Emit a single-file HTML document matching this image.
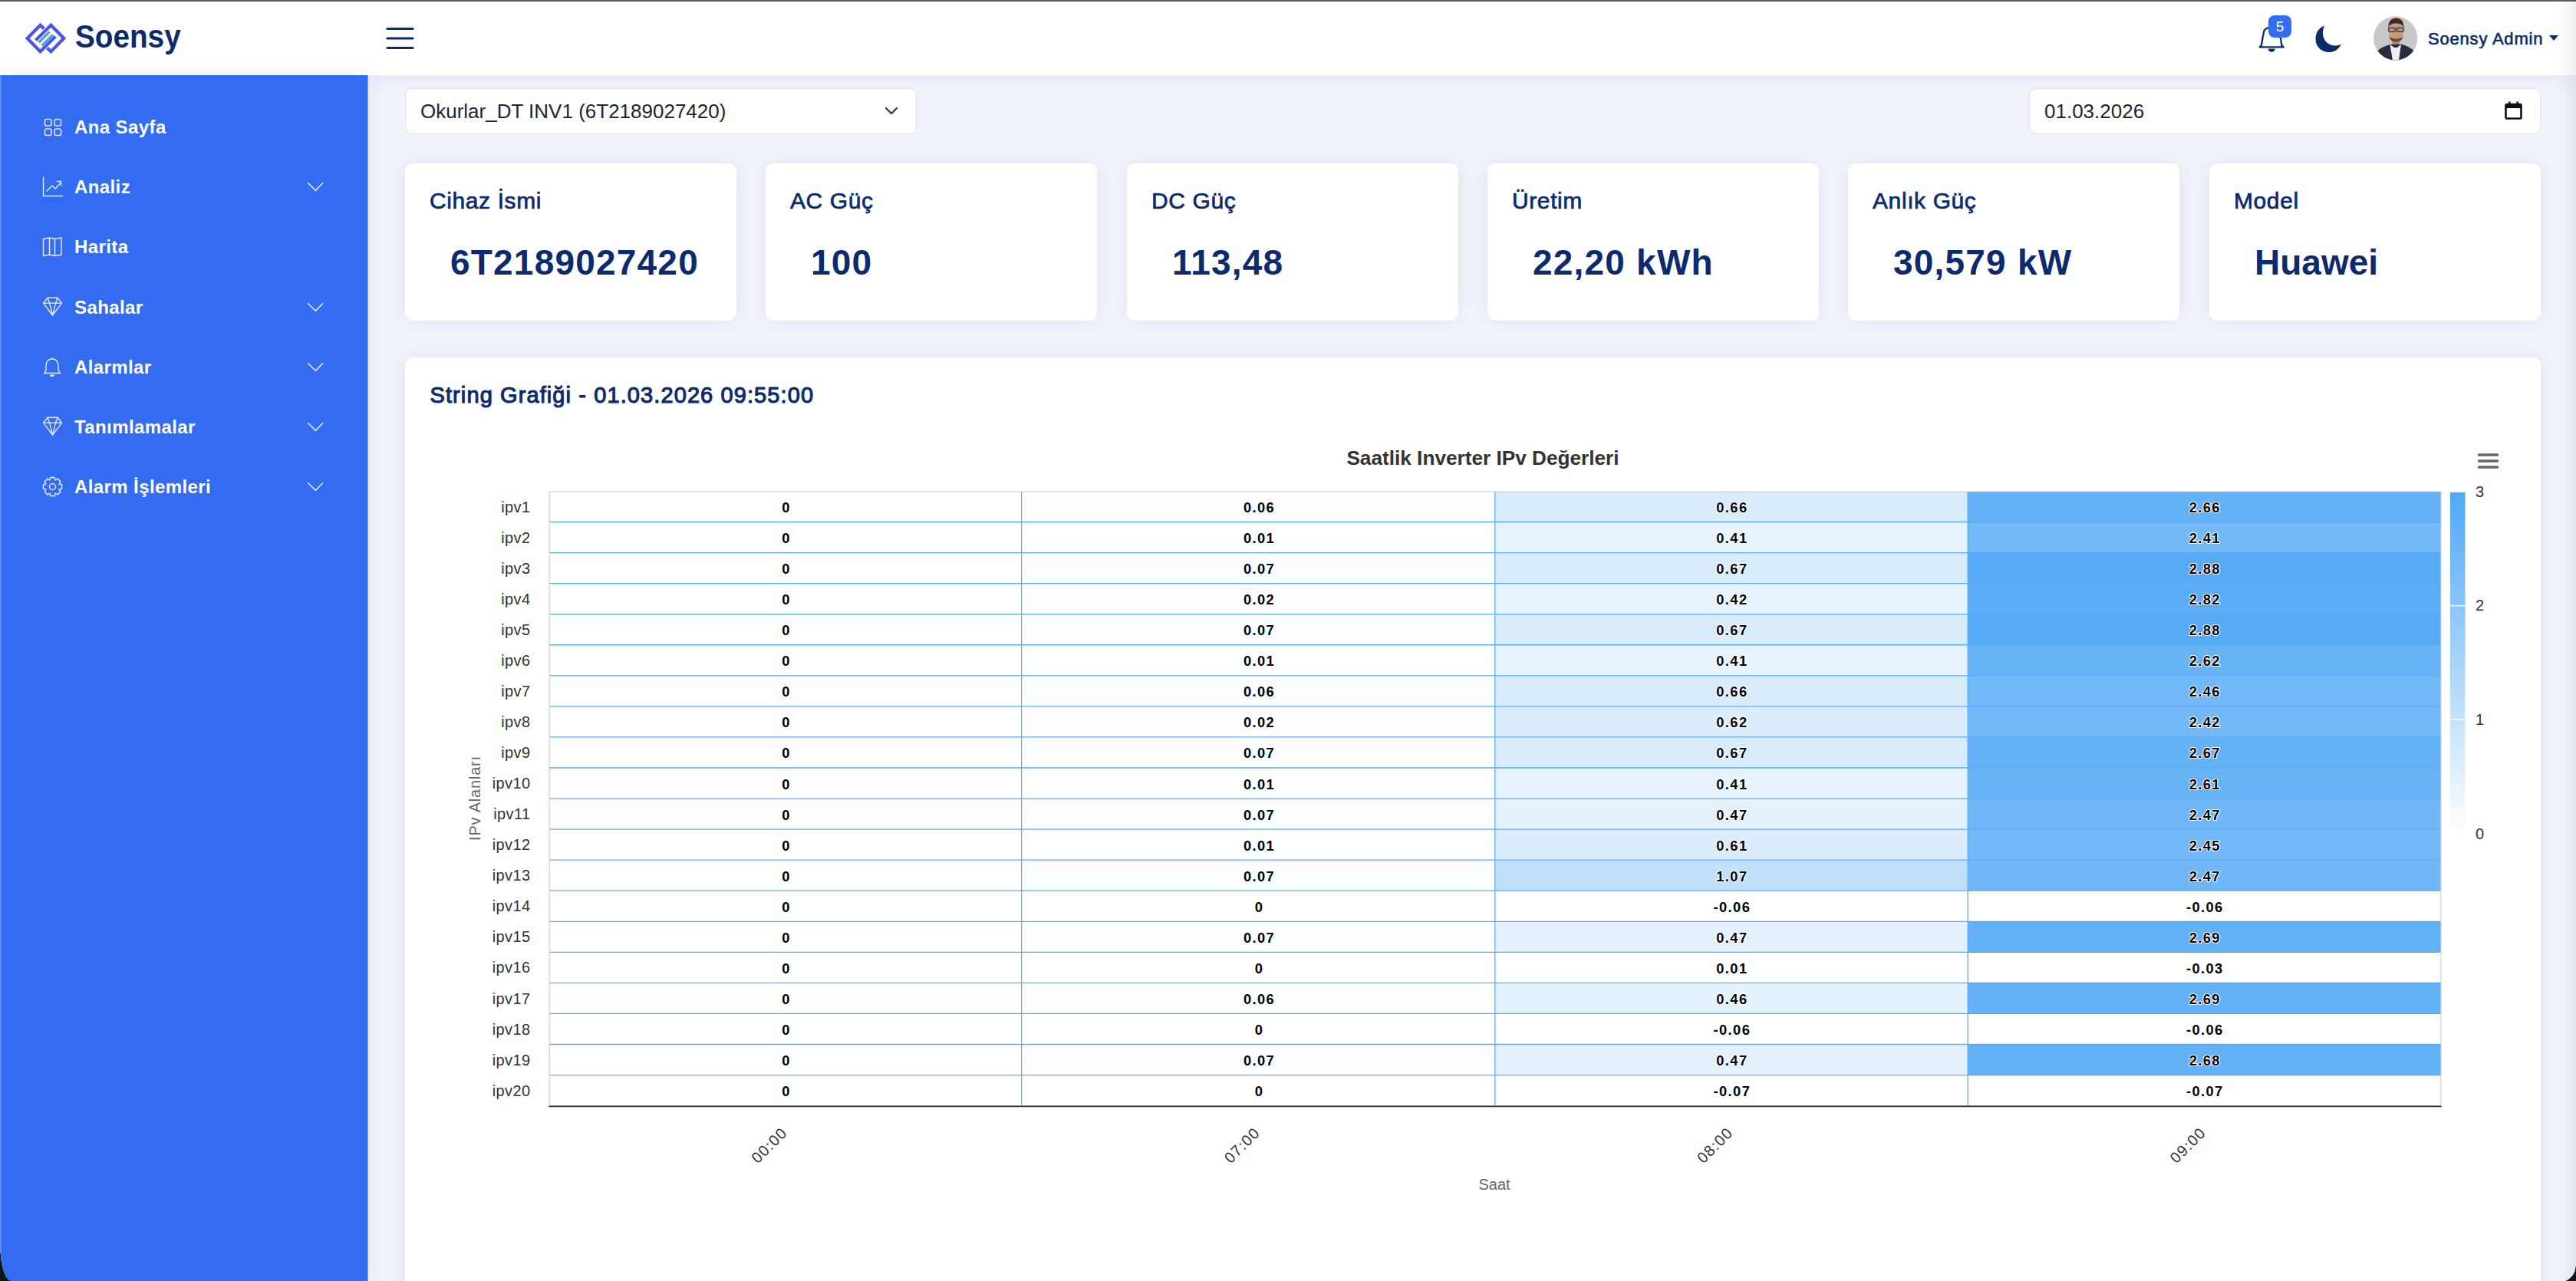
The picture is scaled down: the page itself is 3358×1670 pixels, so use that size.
<!DOCTYPE html>
<html lang="tr">
<head>
<meta charset="utf-8">
<title>Soensy</title>
<style>
*{box-sizing:border-box;margin:0;padding:0}
html,body{width:3358px;height:1670px;overflow:hidden}
body{position:relative;background:#f1f3fb;font-family:"Liberation Sans",sans-serif;color:#212529}
.abs{position:absolute}
#topline{left:0;top:0;width:3358px;height:2px;background:#5c5c5c;z-index:5}
#header{left:0;top:0;width:3358px;height:98px;background:#fff;z-index:2;box-shadow:0 0 24px rgba(60,80,160,.09)}
#sidebar{left:0;top:98px;width:480px;height:1572px;background:#336cf1;z-index:2;box-shadow:0 0 24px rgba(60,80,160,.09)}
#sidebar:before{content:"";position:absolute;left:0;top:0;width:2px;height:100%;background:#5a88f4}
#sidebar:after{content:"";position:absolute;right:0;top:0;width:1px;height:100%;background:#7ea2f6}
.menu{position:absolute;left:0;width:480px;height:40px}
.menu .t{position:absolute;left:97px;top:0;font-size:24px;letter-spacing:0.4px;font-weight:bold;color:#fff;line-height:40px;white-space:nowrap}
.menu svg.ic{position:absolute;left:55px;top:6px}
.menu svg.ch{position:absolute;left:399px;top:13px}
.box{background:#fff;border:1px solid #dfe2ea;border-radius:9px}
.card{position:absolute;top:213px;width:432px;height:205px;background:#fff;border-radius:10px;box-shadow:0 0 24px rgba(60,80,160,.09)}
.card .ti{position:absolute;left:32px;top:29.3px;font-size:30px;color:#0c2a6e;white-space:nowrap;line-height:40px;-webkit-text-stroke:0.7px #0c2a6e;letter-spacing:0.6px}
.card .va{position:absolute;left:59px;top:99.4px;font-size:46px;font-weight:bold;color:#0c2a6e;white-space:nowrap;line-height:60px;letter-spacing:1.2px}
</style>
</head>
<body>
<div id="topline" class="abs"></div>
<div id="header" class="abs">
  <!-- logo -->
  <svg class="abs" style="left:0;top:0" width="100" height="98" viewBox="0 0 100 98">
    <g fill="none" stroke="#4b55e8" stroke-width="4.3" stroke-linecap="butt" stroke-linejoin="miter">
      <polyline points="57.3,37.6 52.5,32.8 35.7,50 52.5,67.2 72.3,47.4"/>
      <polyline points="61.6,62.4 66.4,67.2 83.2,50 66.4,32.8 46.6,52.6"/>
    </g>
    <g stroke="#4aa6d8" stroke-width="3.4" stroke-linecap="butt">
      <line x1="50.6" y1="55.4" x2="64.6" y2="41.4"/>
      <line x1="54.8" y1="59.4" x2="68.8" y2="45.4"/>
    </g>
  </svg>
  <div class="abs" style="left:97.5px;top:19.6px;font-size:43px;font-weight:bold;color:#0d2a6b;line-height:54px;transform:scaleX(0.9);transform-origin:0 0">Soensy</div>
  <!-- hamburger -->
  <svg class="abs" style="left:503px;top:35px" width="38" height="30" viewBox="0 0 38 30">
    <g stroke="#0d2a6b" stroke-width="3.2" stroke-linecap="round">
      <line x1="2" y1="2.5" x2="35" y2="2.5"/><line x1="2" y1="15" x2="35" y2="15"/><line x1="2" y1="27.5" x2="35" y2="27.5"/>
    </g>
  </svg>
  <!-- bell -->
  <svg class="abs" style="left:2940px;top:25px" width="44" height="50" viewBox="0 0 44 50">
    <path d="M5.5 36.3 L7.9 34.3 L10.6 18.5 C11.1 14.6 13.8 10.9 19.5 10.9 L22.9 10.9 C28.6 10.9 31.3 14.6 31.8 18.5 L34.5 34.3 L36.9 36.3 Z" fill="none" stroke="#0d2a6b" stroke-width="2.3" stroke-linejoin="round"/>
    <path d="M16.8 38.4 L25.7 38.4 A4.45 4.45 0 0 1 16.8 38.4 Z" fill="#0d2a6b"/>
  </svg>
  <div class="abs" style="left:2957px;top:20px;width:30px;height:29px;background:#336cf1;border-radius:8px;color:#fff;font-size:19px;line-height:29px;text-align:center">5</div>
  <!-- moon -->
  <svg class="abs" style="left:3017px;top:31px" width="38" height="40" viewBox="0 0 38 40">
    <path d="M13 2.5 C5 5.5 1.5 12.5 1.5 20 C1.5 30 9.5 37 19 37 C26 37 32 33 35 26.5 C32 28 29.5 28.5 27 28.5 C18 28.5 11 21.5 11 12.5 C11 9 11.8 5.5 13 2.5 Z" fill="#0d2a6b"/>
  </svg>
  <!-- avatar -->
  <svg class="abs" style="left:3094px;top:21px" width="58" height="58" viewBox="0 0 58 58">
    <defs><clipPath id="avc"><circle cx="28.7" cy="28.8" r="28.6"/></clipPath></defs>
    <g clip-path="url(#avc)">
      <rect width="58" height="58" fill="#c8c8c8"/>
      <rect x="24" y="28" width="10" height="12" fill="#b98a70"/>
      <path d="M2 58 L4 47 C8 42 14 39.5 21 37 L36 36.5 C44 39 50 42 54 47 L58 58 Z" fill="#262c42"/>
      <path d="M21.5 37 L25 58 L33 58 L36 36.5 L31 41 L27 41 Z" fill="#eeeeee"/>
      <ellipse cx="29.5" cy="19.5" rx="9.6" ry="12.5" fill="#c9977c"/>
      <path d="M20 25 C21 31 24.5 33.8 29.5 33.8 C34.5 33.8 38 31 39 25 C37.5 28.5 34 29.5 29.5 29.5 C25 29.5 21.5 28.5 20 25 Z" fill="#6e4e3c"/>
      <path d="M19.4 16 C19 6 24 2.5 29.5 2.5 C35 2.5 40 6 39.6 16 C38.5 11 35 9.5 29.5 9.5 C24 9.5 20.5 11 19.4 16 Z" fill="#3b2a20"/>
      <g fill="none" stroke="#3d3d3d" stroke-width="1.5"><rect x="19.5" y="15.6" width="9" height="4.6" rx="1.4"/><rect x="30.5" y="15.6" width="9" height="4.6" rx="1.4"/></g>
    </g>
  </svg>
  <div class="abs" style="left:3165px;top:34.8px;font-size:22px;font-weight:normal;-webkit-text-stroke:0.65px #0d2a6b;letter-spacing:0.8px;color:#0d2a6b;line-height:32px;white-space:nowrap">Soensy Admin</div>
  <svg class="abs" style="left:3322.5px;top:45.5px" width="12" height="8" viewBox="0 0 12 8"><path d="M0 0 L12 0 L6 7 Z" fill="#0d2a6b"/></svg>
</div>

<div id="sidebar" class="abs">
<div class="menu" style="top:47.6px"><svg class="ic" width="28" height="28" viewBox="0 0 28 28"><g fill="none" stroke="#e3e8fc" stroke-width="1.5"><rect x="3.5" y="3.5" width="8.5" height="8.5" rx="2.2"/><rect x="16" y="3.5" width="8.5" height="8.5" rx="2.2"/><rect x="3.5" y="16" width="8.5" height="8.5" rx="2.2"/><rect x="16" y="16" width="8.5" height="8.5" rx="2.2"/></g></svg><div class="t">Ana Sayfa</div></div>
<div class="menu" style="top:125.9px"><svg class="ic" width="28" height="28" viewBox="0 0 28 28"><g fill="none" stroke="#e3e8fc" stroke-width="1.4"><polyline points="1.5,0.5 1.5,25.5 27,25.5"/><polyline points="5.5,19.5 13,12 17,16 24.5,8"/><polyline points="19,6.5 24.5,6.5 24.5,12"/></g></svg><div class="t">Analiz</div><svg class="ch" width="24" height="14" viewBox="0 0 24 14"><polyline points="2.2,1.2 12.4,11.3 22.1,1.2" fill="none" stroke="#e3e8fc" stroke-width="1.6"/></svg></div>
<div class="menu" style="top:204.2px"><svg class="ic" width="28" height="28" viewBox="0 0 28 28"><g fill="none" stroke="#e3e8fc" stroke-width="1.5" stroke-linejoin="round"><path d="M1.5 3.5 L9.5 2 L16.5 3.5 L25 2 L25 24 L16.5 25.5 L9.5 24 L1.5 25.5 Z"/><line x1="9.5" y1="2" x2="9.5" y2="24"/><line x1="16.5" y1="3.5" x2="16.5" y2="25.5"/></g></svg><div class="t">Harita</div></div>
<div class="menu" style="top:282.5px"><svg class="ic" width="28" height="28" viewBox="0 0 28 28"><g fill="none" stroke="#e3e8fc" stroke-width="1.4" stroke-linejoin="round"><path d="M7 1.2 L20 1.2 L25.5 8.2 L13.5 24 L1.5 8.2 Z"/><line x1="1.5" y1="8.2" x2="25.5" y2="8.2"/><polyline points="7,1.2 9.5,8.2 13.5,24 17.5,8.2 20,1.2"/></g></svg><div class="t">Sahalar</div><svg class="ch" width="24" height="14" viewBox="0 0 24 14"><polyline points="2.2,1.2 12.4,11.3 22.1,1.2" fill="none" stroke="#e3e8fc" stroke-width="1.6"/></svg></div>
<div class="menu" style="top:360.8px"><svg class="ic" width="28" height="28" viewBox="0 0 28 28"><g fill="none" stroke="#e3e8fc" stroke-width="1.4" stroke-linejoin="round"><path d="M2.5 21.5 L5 18.5 L5 11 C5 6 8.5 3 13 3 C17.5 3 21 6 21 11 L21 18.5 L23.5 21.5 Z"/><line x1="13" y1="1" x2="13" y2="3"/></g><path d="M10 23.5 a3 2.6 0 0 0 6 0 Z" fill="#e3e8fc"/></svg><div class="t">Alarmlar</div><svg class="ch" width="24" height="14" viewBox="0 0 24 14"><polyline points="2.2,1.2 12.4,11.3 22.1,1.2" fill="none" stroke="#e3e8fc" stroke-width="1.6"/></svg></div>
<div class="menu" style="top:439.1px"><svg class="ic" width="28" height="28" viewBox="0 0 28 28"><g fill="none" stroke="#e3e8fc" stroke-width="1.4" stroke-linejoin="round"><path d="M7 1.2 L20 1.2 L25.5 8.2 L13.5 24 L1.5 8.2 Z"/><line x1="1.5" y1="8.2" x2="25.5" y2="8.2"/><polyline points="7,1.2 9.5,8.2 13.5,24 17.5,8.2 20,1.2"/></g></svg><div class="t">Tanımlamalar</div><svg class="ch" width="24" height="14" viewBox="0 0 24 14"><polyline points="2.2,1.2 12.4,11.3 22.1,1.2" fill="none" stroke="#e3e8fc" stroke-width="1.6"/></svg></div>
<div class="menu" style="top:517.4px"><svg class="ic" width="28" height="28" viewBox="0 0 28 28"><g fill="none" stroke="#e3e8fc" stroke-width="1.5" stroke-linejoin="round"><circle cx="13.5" cy="13.5" r="4"/><path d="M25.50 10.82 L25.50 16.18 L22.07 17.12 L22.12 17.00 L23.89 20.09 L20.09 23.89 L17.00 22.12 L17.12 22.07 L16.18 25.50 L10.82 25.50 L9.88 22.07 L10.00 22.12 L6.91 23.89 L3.11 20.09 L4.88 17.00 L4.93 17.12 L1.50 16.18 L1.50 10.82 L4.93 9.88 L4.88 10.00 L3.11 6.91 L6.91 3.11 L10.00 4.88 L9.88 4.93 L10.82 1.50 L16.18 1.50 L17.12 4.93 L17.00 4.88 L20.09 3.11 L23.89 6.91 L22.12 10.00 L22.07 9.88 Z"/></g></svg><div class="t">Alarm İşlemleri</div><svg class="ch" width="24" height="14" viewBox="0 0 24 14"><polyline points="2.2,1.2 12.4,11.3 22.1,1.2" fill="none" stroke="#e3e8fc" stroke-width="1.6"/></svg></div>
</div>

<!-- top row -->
<div class="abs box" style="left:528px;top:115px;width:667px;height:60px"></div>
<div class="abs" style="left:548px;top:128px;font-size:26px;color:#212529;line-height:34px;white-space:nowrap">Okurlar_DT INV1 (6T2189027420)</div>
<svg class="abs" style="left:1151px;top:137px" width="22" height="14" viewBox="0 0 22 14"><path d="M4 4 L11 11 L18 4" fill="none" stroke="#343a40" stroke-width="2.4" stroke-linecap="round" stroke-linejoin="round"/></svg>

<div class="abs box" style="left:2645px;top:115px;width:667px;height:60px"></div>
<div class="abs" style="left:2665px;top:128px;font-size:26px;color:#212529;line-height:34px;white-space:nowrap">01.03.2026</div>
<svg class="abs" style="left:3265px;top:132px" width="23" height="24" viewBox="0 0 23 24">
  <rect x="1.5" y="4" width="20" height="18.5" rx="1.5" fill="none" stroke="#111" stroke-width="2.6"/>
  <rect x="1.5" y="4" width="20" height="5" fill="#111"/>
  <rect x="5" y="0.5" width="2.6" height="4" fill="#111"/><rect x="15.4" y="0.5" width="2.6" height="4" fill="#111"/>
</svg>

<!-- cards -->
<div class="card" style="left:528px"><div class="ti">Cihaz İsmi</div><div class="va">6T2189027420</div></div>
<div class="card" style="left:998px"><div class="ti">AC Güç</div><div class="va">100</div></div>
<div class="card" style="left:1469px"><div class="ti">DC Güç</div><div class="va">113,48</div></div>
<div class="card" style="left:1939px"><div class="ti">Üretim</div><div class="va">22,20 kWh</div></div>
<div class="card" style="left:2409px"><div class="ti">Anlık Güç</div><div class="va">30,579 kW</div></div>
<div class="card" style="left:2880px"><div class="ti">Model</div><div class="va" style="letter-spacing:0">Huawei</div></div>

<!-- chart card -->
<div class="abs" style="left:528px;top:466px;width:2784px;height:1300px;background:#fff;border-radius:10px;box-shadow:0 0 24px rgba(60,80,160,.09)"></div>
<div class="abs" style="left:560.5px;top:494.6px;font-size:29px;font-weight:normal;-webkit-text-stroke:1.1px #0c2a6e;color:#0c2a6e;line-height:40px;white-space:nowrap;letter-spacing:1.1px">String Grafiği - 01.03.2026 09:55:00</div>

<svg id="chart" class="abs" style="left:0;top:0" width="3358" height="1670" viewBox="0 0 3358 1670">
<g font-family="Liberation Sans, sans-serif">
<text x="1933" y="605.5" text-anchor="middle" font-size="26.2" font-weight="bold" fill="#333">Saatlik Inverter IPv Değerleri</text>
<g stroke="#666" stroke-width="3.4" stroke-linecap="round"><line x1="3231.5" y1="593" x2="3255.5" y2="593"/><line x1="3231.5" y1="601" x2="3255.5" y2="601"/><line x1="3231.5" y1="609" x2="3255.5" y2="609"/></g>
<rect x="716.20" y="640.80" width="616.70" height="40.34" fill="#ffffff"/>
<rect x="716.20" y="680.84" width="616.70" height="40.34" fill="#ffffff"/>
<rect x="716.20" y="720.88" width="616.70" height="40.34" fill="#ffffff"/>
<rect x="716.20" y="760.92" width="616.70" height="40.34" fill="#ffffff"/>
<rect x="716.20" y="800.96" width="616.70" height="40.34" fill="#ffffff"/>
<rect x="716.20" y="841.00" width="616.70" height="40.34" fill="#ffffff"/>
<rect x="716.20" y="881.04" width="616.70" height="40.34" fill="#ffffff"/>
<rect x="716.20" y="921.08" width="616.70" height="40.34" fill="#ffffff"/>
<rect x="716.20" y="961.12" width="616.70" height="40.34" fill="#ffffff"/>
<rect x="716.20" y="1001.16" width="616.70" height="40.34" fill="#ffffff"/>
<rect x="716.20" y="1041.20" width="616.70" height="40.34" fill="#ffffff"/>
<rect x="716.20" y="1081.24" width="616.70" height="40.34" fill="#ffffff"/>
<rect x="716.20" y="1121.28" width="616.70" height="40.34" fill="#ffffff"/>
<rect x="716.20" y="1161.32" width="616.70" height="40.34" fill="#ffffff"/>
<rect x="716.20" y="1201.36" width="616.70" height="40.34" fill="#ffffff"/>
<rect x="716.20" y="1241.40" width="616.70" height="40.34" fill="#ffffff"/>
<rect x="716.20" y="1281.44" width="616.70" height="40.34" fill="#ffffff"/>
<rect x="716.20" y="1321.48" width="616.70" height="40.34" fill="#ffffff"/>
<rect x="716.20" y="1361.52" width="616.70" height="40.34" fill="#ffffff"/>
<rect x="716.20" y="1401.56" width="616.70" height="40.34" fill="#ffffff"/>
<rect x="1332.60" y="640.80" width="616.70" height="40.34" fill="#fcfdff"/>
<rect x="1332.60" y="680.84" width="616.70" height="40.34" fill="#feffff"/>
<rect x="1332.60" y="720.88" width="616.70" height="40.34" fill="#fbfdff"/>
<rect x="1332.60" y="760.92" width="616.70" height="40.34" fill="#fefeff"/>
<rect x="1332.60" y="800.96" width="616.70" height="40.34" fill="#fbfdff"/>
<rect x="1332.60" y="841.00" width="616.70" height="40.34" fill="#feffff"/>
<rect x="1332.60" y="881.04" width="616.70" height="40.34" fill="#fcfdff"/>
<rect x="1332.60" y="921.08" width="616.70" height="40.34" fill="#fefeff"/>
<rect x="1332.60" y="961.12" width="616.70" height="40.34" fill="#fbfdff"/>
<rect x="1332.60" y="1001.16" width="616.70" height="40.34" fill="#feffff"/>
<rect x="1332.60" y="1041.20" width="616.70" height="40.34" fill="#fbfdff"/>
<rect x="1332.60" y="1081.24" width="616.70" height="40.34" fill="#feffff"/>
<rect x="1332.60" y="1121.28" width="616.70" height="40.34" fill="#fbfdff"/>
<rect x="1332.60" y="1161.32" width="616.70" height="40.34" fill="#ffffff"/>
<rect x="1332.60" y="1201.36" width="616.70" height="40.34" fill="#fbfdff"/>
<rect x="1332.60" y="1241.40" width="616.70" height="40.34" fill="#ffffff"/>
<rect x="1332.60" y="1281.44" width="616.70" height="40.34" fill="#fcfdff"/>
<rect x="1332.60" y="1321.48" width="616.70" height="40.34" fill="#ffffff"/>
<rect x="1332.60" y="1361.52" width="616.70" height="40.34" fill="#fbfdff"/>
<rect x="1332.60" y="1401.56" width="616.70" height="40.34" fill="#ffffff"/>
<rect x="1949.00" y="640.80" width="616.70" height="40.34" fill="#d8ecfd"/>
<rect x="1949.00" y="680.84" width="616.70" height="40.34" fill="#e7f3fe"/>
<rect x="1949.00" y="720.88" width="616.70" height="40.34" fill="#d8ecfd"/>
<rect x="1949.00" y="760.92" width="616.70" height="40.34" fill="#e6f3fe"/>
<rect x="1949.00" y="800.96" width="616.70" height="40.34" fill="#d8ecfd"/>
<rect x="1949.00" y="841.00" width="616.70" height="40.34" fill="#e7f3fe"/>
<rect x="1949.00" y="881.04" width="616.70" height="40.34" fill="#d8ecfd"/>
<rect x="1949.00" y="921.08" width="616.70" height="40.34" fill="#dbedfd"/>
<rect x="1949.00" y="961.12" width="616.70" height="40.34" fill="#d8ecfd"/>
<rect x="1949.00" y="1001.16" width="616.70" height="40.34" fill="#e7f3fe"/>
<rect x="1949.00" y="1041.20" width="616.70" height="40.34" fill="#e4f1fd"/>
<rect x="1949.00" y="1081.24" width="616.70" height="40.34" fill="#dbedfd"/>
<rect x="1949.00" y="1121.28" width="616.70" height="40.34" fill="#c1e0fb"/>
<rect x="1949.00" y="1161.32" width="616.70" height="40.34" fill="#ffffff"/>
<rect x="1949.00" y="1201.36" width="616.70" height="40.34" fill="#e4f1fd"/>
<rect x="1949.00" y="1241.40" width="616.70" height="40.34" fill="#feffff"/>
<rect x="1949.00" y="1281.44" width="616.70" height="40.34" fill="#e4f2fd"/>
<rect x="1949.00" y="1321.48" width="616.70" height="40.34" fill="#ffffff"/>
<rect x="1949.00" y="1361.52" width="616.70" height="40.34" fill="#e4f1fd"/>
<rect x="1949.00" y="1401.56" width="616.70" height="40.34" fill="#ffffff"/>
<rect x="2565.40" y="640.80" width="616.70" height="40.34" fill="#64b2f6"/>
<rect x="2565.40" y="680.84" width="616.70" height="40.34" fill="#72b9f7"/>
<rect x="2565.40" y="720.88" width="616.70" height="40.34" fill="#57abf5"/>
<rect x="2565.40" y="760.92" width="616.70" height="40.34" fill="#5aadf6"/>
<rect x="2565.40" y="800.96" width="616.70" height="40.34" fill="#57abf5"/>
<rect x="2565.40" y="841.00" width="616.70" height="40.34" fill="#66b3f6"/>
<rect x="2565.40" y="881.04" width="616.70" height="40.34" fill="#70b8f7"/>
<rect x="2565.40" y="921.08" width="616.70" height="40.34" fill="#72b9f7"/>
<rect x="2565.40" y="961.12" width="616.70" height="40.34" fill="#63b2f6"/>
<rect x="2565.40" y="1001.16" width="616.70" height="40.34" fill="#67b3f6"/>
<rect x="2565.40" y="1041.20" width="616.70" height="40.34" fill="#6fb7f7"/>
<rect x="2565.40" y="1081.24" width="616.70" height="40.34" fill="#70b8f7"/>
<rect x="2565.40" y="1121.28" width="616.70" height="40.34" fill="#6fb7f7"/>
<rect x="2565.40" y="1161.32" width="616.70" height="40.34" fill="#ffffff"/>
<rect x="2565.40" y="1201.36" width="616.70" height="40.34" fill="#62b1f6"/>
<rect x="2565.40" y="1241.40" width="616.70" height="40.34" fill="#ffffff"/>
<rect x="2565.40" y="1281.44" width="616.70" height="40.34" fill="#62b1f6"/>
<rect x="2565.40" y="1321.48" width="616.70" height="40.34" fill="#ffffff"/>
<rect x="2565.40" y="1361.52" width="616.70" height="40.34" fill="#63b1f6"/>
<rect x="2565.40" y="1401.56" width="616.70" height="40.34" fill="#ffffff"/>
<path d="M716.2 680.50H3181.8M716.2 720.56H3181.8M716.2 760.62H3181.8M716.2 800.68H3181.8M716.2 840.74H3181.8M716.2 880.80H3181.8M716.2 920.86H3181.8M716.2 960.92H3181.8M716.2 1000.98H3181.8M716.2 1041.04H3181.8M716.2 1081.10H3181.8M716.2 1121.16H3181.8M716.2 1161.22H3181.8M716.2 1201.28H3181.8M716.2 1241.34H3181.8M716.2 1281.40H3181.8M716.2 1321.46H3181.8M716.2 1361.52H3181.8M716.2 1401.58H3181.8M716.2 1441.64H3181.8M1331.60 640.8V1441.6M1948.80 640.8V1441.6M2565.20 640.8V1441.6" fill="none" stroke="#5aabf7" stroke-width="1.3"/>
<path d="M716.2 1441.6 L716.2 641.0 L3181.8 641.0 L3181.8 1441.6" fill="none" stroke="#cccccc" stroke-width="1.1"/>
<line x1="715.2" y1="1442.6" x2="3182.8" y2="1442.6" stroke="#333" stroke-width="1.5"/>
<g font-size="18.3" font-weight="bold" letter-spacing="1.4" text-anchor="middle" fill="#000" stroke="#fff" stroke-width="2.2" paint-order="stroke" stroke-linejoin="round">
<text x="1025.1" y="668.1">0</text>
<text x="1025.1" y="708.2">0</text>
<text x="1025.1" y="748.2">0</text>
<text x="1025.1" y="788.2">0</text>
<text x="1025.1" y="828.3">0</text>
<text x="1025.1" y="868.3">0</text>
<text x="1025.1" y="908.4">0</text>
<text x="1025.1" y="948.4">0</text>
<text x="1025.1" y="988.4">0</text>
<text x="1025.1" y="1028.5">0</text>
<text x="1025.1" y="1068.5">0</text>
<text x="1025.1" y="1108.6">0</text>
<text x="1025.1" y="1148.6">0</text>
<text x="1025.1" y="1188.6">0</text>
<text x="1025.1" y="1228.7">0</text>
<text x="1025.1" y="1268.7">0</text>
<text x="1025.1" y="1308.8">0</text>
<text x="1025.1" y="1348.8">0</text>
<text x="1025.1" y="1388.8">0</text>
<text x="1025.1" y="1428.9">0</text>
<text x="1641.5" y="668.1">0.06</text>
<text x="1641.5" y="708.2">0.01</text>
<text x="1641.5" y="748.2">0.07</text>
<text x="1641.5" y="788.2">0.02</text>
<text x="1641.5" y="828.3">0.07</text>
<text x="1641.5" y="868.3">0.01</text>
<text x="1641.5" y="908.4">0.06</text>
<text x="1641.5" y="948.4">0.02</text>
<text x="1641.5" y="988.4">0.07</text>
<text x="1641.5" y="1028.5">0.01</text>
<text x="1641.5" y="1068.5">0.07</text>
<text x="1641.5" y="1108.6">0.01</text>
<text x="1641.5" y="1148.6">0.07</text>
<text x="1641.5" y="1188.6">0</text>
<text x="1641.5" y="1228.7">0.07</text>
<text x="1641.5" y="1268.7">0</text>
<text x="1641.5" y="1308.8">0.06</text>
<text x="1641.5" y="1348.8">0</text>
<text x="1641.5" y="1388.8">0.07</text>
<text x="1641.5" y="1428.9">0</text>
<text x="2257.9" y="668.1">0.66</text>
<text x="2257.9" y="708.2">0.41</text>
<text x="2257.9" y="748.2">0.67</text>
<text x="2257.9" y="788.2">0.42</text>
<text x="2257.9" y="828.3">0.67</text>
<text x="2257.9" y="868.3">0.41</text>
<text x="2257.9" y="908.4">0.66</text>
<text x="2257.9" y="948.4">0.62</text>
<text x="2257.9" y="988.4">0.67</text>
<text x="2257.9" y="1028.5">0.41</text>
<text x="2257.9" y="1068.5">0.47</text>
<text x="2257.9" y="1108.6">0.61</text>
<text x="2257.9" y="1148.6">1.07</text>
<text x="2257.9" y="1188.6">-0.06</text>
<text x="2257.9" y="1228.7">0.47</text>
<text x="2257.9" y="1268.7">0.01</text>
<text x="2257.9" y="1308.8">0.46</text>
<text x="2257.9" y="1348.8">-0.06</text>
<text x="2257.9" y="1388.8">0.47</text>
<text x="2257.9" y="1428.9">-0.07</text>
<text x="2874.3" y="668.1">2.66</text>
<text x="2874.3" y="708.2">2.41</text>
<text x="2874.3" y="748.2">2.88</text>
<text x="2874.3" y="788.2">2.82</text>
<text x="2874.3" y="828.3">2.88</text>
<text x="2874.3" y="868.3">2.62</text>
<text x="2874.3" y="908.4">2.46</text>
<text x="2874.3" y="948.4">2.42</text>
<text x="2874.3" y="988.4">2.67</text>
<text x="2874.3" y="1028.5">2.61</text>
<text x="2874.3" y="1068.5">2.47</text>
<text x="2874.3" y="1108.6">2.45</text>
<text x="2874.3" y="1148.6">2.47</text>
<text x="2874.3" y="1188.6">-0.06</text>
<text x="2874.3" y="1228.7">2.69</text>
<text x="2874.3" y="1268.7">-0.03</text>
<text x="2874.3" y="1308.8">2.69</text>
<text x="2874.3" y="1348.8">-0.06</text>
<text x="2874.3" y="1388.8">2.68</text>
<text x="2874.3" y="1428.9">-0.07</text>
</g>
<g font-size="20" text-anchor="end" fill="#333" letter-spacing="0.35">
<text x="691.4" y="667.8">ipv1</text>
<text x="691.4" y="707.9">ipv2</text>
<text x="691.4" y="747.9">ipv3</text>
<text x="691.4" y="787.9">ipv4</text>
<text x="691.4" y="828.0">ipv5</text>
<text x="691.4" y="868.0">ipv6</text>
<text x="691.4" y="908.1">ipv7</text>
<text x="691.4" y="948.1">ipv8</text>
<text x="691.4" y="988.1">ipv9</text>
<text x="691.4" y="1028.2">ipv10</text>
<text x="691.4" y="1068.2">ipv11</text>
<text x="691.4" y="1108.3">ipv12</text>
<text x="691.4" y="1148.3">ipv13</text>
<text x="691.4" y="1188.3">ipv14</text>
<text x="691.4" y="1228.4">ipv15</text>
<text x="691.4" y="1268.4">ipv16</text>
<text x="691.4" y="1308.5">ipv17</text>
<text x="691.4" y="1348.5">ipv18</text>
<text x="691.4" y="1388.5">ipv19</text>
<text x="691.4" y="1428.6">ipv20</text>
</g>
<g font-size="20" text-anchor="end" fill="#333" letter-spacing="1.2">
<text transform="translate(1027.4 1478) rotate(-45)" x="0" y="0">00:00</text>
<text transform="translate(1643.8 1478) rotate(-45)" x="0" y="0">07:00</text>
<text transform="translate(2260.2 1478) rotate(-45)" x="0" y="0">08:00</text>
<text transform="translate(2876.6 1478) rotate(-45)" x="0" y="0">09:00</text>
</g>
<text x="1948" y="1550.5" text-anchor="middle" font-size="20" fill="#666">Saat</text>
<text transform="translate(626 1040.5) rotate(-90)" text-anchor="middle" font-size="20" fill="#666" letter-spacing="0.8">IPv Alanları</text>
<defs><linearGradient id="lg" x1="0" y1="1" x2="0" y2="0"><stop offset="0" stop-color="#ffffff"/><stop offset="1" stop-color="#50a8f5"/></linearGradient></defs>
<rect x="3194.0" y="641.0" width="19.5" height="446.0" rx="3" fill="url(#lg)"/>
<text x="3227" y="1093.5" font-size="20" fill="#333">0</text>
<line x1="3194.0" y1="938.3" x2="3213.5" y2="938.3" stroke="#fff" stroke-width="1.5"/>
<text x="3227" y="944.8" font-size="20" fill="#333">1</text>
<line x1="3194.0" y1="789.7" x2="3213.5" y2="789.7" stroke="#fff" stroke-width="1.5"/>
<text x="3227" y="796.2" font-size="20" fill="#333">2</text>
<line x1="3194.0" y1="641.0" x2="3213.5" y2="641.0" stroke="#fff" stroke-width="1.5"/>
<text x="3227" y="647.5" font-size="20" fill="#333">3</text>
</g>
</svg>
<div class="abs" style="left:3328px;top:0;width:30px;height:1670px;background:linear-gradient(to right,rgba(20,25,60,0) 0%,rgba(20,25,60,.015) 50%,rgba(20,25,60,.07) 100%);z-index:8"></div>
<div class="abs" style="left:0;top:1624px;width:14px;height:46px;background:radial-gradient(14px 46px at 14px 0,rgba(0,0,0,0) 98%,#141414 100%);z-index:9"></div>
<div class="abs" style="left:3336px;top:1650px;width:22px;height:20px;background:radial-gradient(circle 22px at 0 0,rgba(0,0,0,0) 21.3px,#141414 22px);z-index:9"></div>
</body>
</html>
